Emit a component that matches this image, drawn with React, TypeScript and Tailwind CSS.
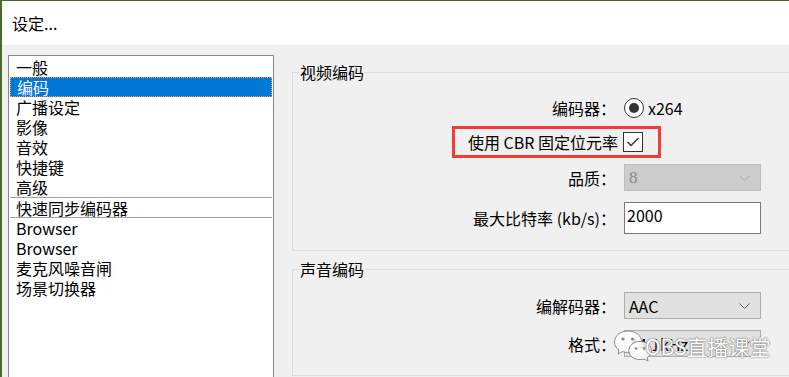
import type { ReactNode } from 'react';

const Chevron = ({ color }: { color: string }) => (
  <svg width="11" height="6" viewBox="0 0 11 6" className="shrink-0">
    <path d="M0.5 0.5 L5.5 5.5 L10.5 0.5" fill="none" stroke={color} strokeWidth="1" />
  </svg>
);

const Row = ({ label, className, children }: { label?: string; className: string; children: ReactNode }) => (
  <div className={`flex items-center ${className}`}>
    <div className="w-[323px] shrink-0 text-right whitespace-nowrap">{label}</div>
    <div className="ml-[8px] flex items-center h-full">{children}</div>
  </div>
);

const Combo = ({ value, disabled }: { value: string; disabled?: boolean }) => (
  <div
    className={`w-[137px] h-full flex items-center justify-between border pl-[4px] pr-[10px] ${
      disabled ? 'bg-[#cccccc] border-[#bfbfbf] text-[#8a8a8a]' : 'bg-[#e1e1e1] border-[#adadad] text-black'
    }`}
  >
    <span className={disabled ? "[font-family:'Liberation_Serif',serif] text-[17px]" : ''}>{value}</span>
    <Chevron color={disabled ? '#a8a8a8' : '#606060'} />
  </div>
);

const WeChat = () => (
  <svg width="40" height="34" viewBox="0 0 40 34">
    <g fill="rgba(255,255,255,0.85)" stroke="#8a8a8a" strokeWidth="1">
      <path d="M15 2 C7 2 1.5 7 1.5 13 C1.5 16.5 3.3 19.3 6 21 L5 25 L9.5 22.6 C11.2 23.1 13 23.4 15 23.4 C23 23.4 28.5 18.5 28.5 12.7 C28.5 7 23 2 15 2 Z" />
      <path d="M27 12.5 C20.5 12.5 15.8 16.6 15.8 21.6 C15.8 26.6 20.5 30.6 27 30.6 C28.5 30.6 29.8 30.4 31 30 L35 32 L34 28.6 C36.6 27 38.3 24.4 38.3 21.6 C38.3 16.6 33.5 12.5 27 12.5 Z" />
    </g>
    <g fill="#8a8a8a">
      <circle cx="10" cy="10" r="1.6" />
      <circle cx="19.5" cy="10" r="1.6" />
      <circle cx="23" cy="19.5" r="1.3" />
      <circle cx="31" cy="19.5" r="1.3" />
    </g>
  </svg>
);

const items: { name: string; selected?: boolean; divided?: boolean }[] = [
  { name: '一般' },
  { name: '编码', selected: true },
  { name: '广播设定' },
  { name: '影像' },
  { name: '音效' },
  { name: '快捷键' },
  { name: '高级' },
  { name: '快速同步编码器', divided: true },
  { name: 'Browser' },
  { name: 'Browser' },
  { name: '麦克风噪音闸' },
  { name: '场景切换器' },
];

export default function App() {
  return (
    <div className="w-[789px] h-[377px] overflow-hidden flex flex-col bg-[#f0f0f0] border-t border-l-2 border-[#4a6b2a] text-black text-[16px] leading-[20px] [font-family:'Noto_Sans_CJK_SC',sans-serif]">
      <div className="h-[44px] shrink-0 bg-white flex items-center pl-[10px]">设定...</div>

      <div className="flex items-start pt-[10px] pl-[6px]">
        {/* left category list */}
        <div className="w-[266px] h-[340px] shrink-0 border border-[#828790] bg-white p-[1px]">
          {items.map((it, i) =>
            it.divided ? (
              <div key={i} className="h-[21px] border-y border-[#a0a0a0] pl-[6px] flex items-center">
                {it.name}
              </div>
            ) : (
              <div
                key={i}
                className={`h-[20px] pl-[6px] flex items-center ${
                  it.selected ? 'bg-[#0078d7] text-white border border-dotted border-[#f0a040] pl-[5px]' : ''
                }`}
              >
                {it.name}
              </div>
            )
          )}
        </div>

        {/* right settings */}
        <div className="ml-[18px] w-[520px] shrink-0">
          <fieldset className="mt-[7px] border border-[#dcdcdc] pb-[16px]">
            <legend className="ml-[6px] px-[1px] leading-[20px]">视频编码</legend>

            <Row label="编码器：" className="mt-[16px] h-[20px]">
              <div className="w-[20px] h-[20px] rounded-full border border-[#333] bg-white flex items-center justify-center">
                <div className="w-[10px] h-[10px] rounded-full bg-[#333]" />
              </div>
              <span className="ml-[4px]">x264</span>
            </Row>

            <div className="mt-[8px] h-[32px] pl-[159px]">
              <div className="w-[209px] h-[32px] border-[3px] border-[#f23b3b] flex items-center pl-[13px] pr-[15px]">
                <span className="whitespace-nowrap">使用 CBR 固定位元率</span>
                <div className="ml-auto w-[20px] h-[20px] border border-[#333] bg-white">
                  <svg width="18" height="18" viewBox="0 0 18 18">
                    <path d="M3.5 9 L7 12.5 L14.5 5" fill="none" stroke="#333" strokeWidth="1.4" />
                  </svg>
                </div>
              </div>
            </div>

            <Row label="品质：" className="mt-[6px] h-[27px]">
              <Combo value="8" disabled />
            </Row>

            <Row label="最大比特率 (kb/s)：" className="mt-[11px] h-[32px]">
              <div className="w-[137px] h-full border border-[#7a7a7a] bg-white pl-[2px] pt-[2px]">2000</div>
            </Row>
          </fieldset>

          <fieldset className="mt-[8px] border border-[#dcdcdc] pb-[18px]">
            <legend className="ml-[6px] px-[1px] leading-[20px]">声音编码</legend>

            <Row label="编解码器：" className="mt-[13px] h-[27px]">
              <Combo value="AAC" />
            </Row>

            <div className="relative">
              <Row label="格式：" className="mt-[11px] h-[27px]">
                <Combo value="44.1kHz" />
              </Row>
              {/* watermark */}
              <div className="absolute left-[320px] top-[-1px] flex items-center pointer-events-none">
                <WeChat />
                <span className="-ml-[8px] text-[21px] leading-[28px] text-white [text-shadow:0_0_1px_#555,0_0_2px_#888]">
                  OBS直播课堂
                </span>
              </div>
            </div>
          </fieldset>
        </div>
      </div>
    </div>
  );
}
